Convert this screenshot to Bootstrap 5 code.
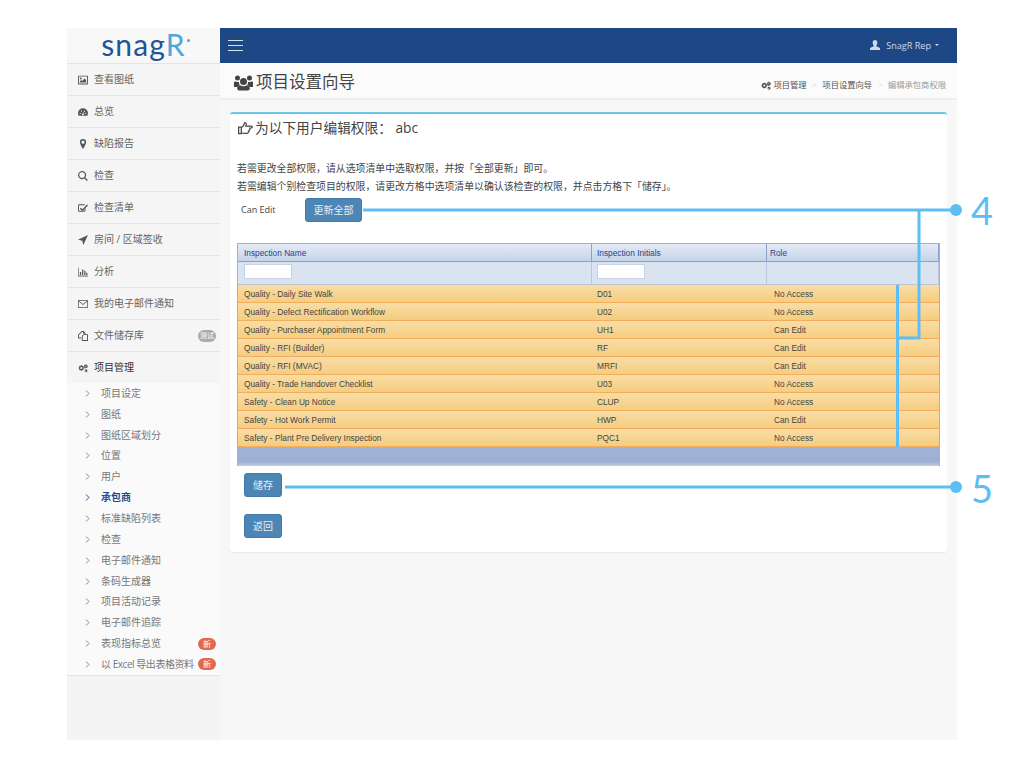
<!DOCTYPE html>
<html lang="zh">
<head>
  <meta charset="UTF-8">
  <meta name="viewport" content="width=device-width, initial-scale=1.0">
  <title>项目设置向导</title>
  <link href="https://cdn.jsdelivr.net/npm/bootstrap@5.3.2/dist/css/bootstrap.min.css" rel="stylesheet">
  <style>
    body {
      background: #fff;
      font-family: "Open Sans", "Noto Sans CJK SC", sans-serif;
      color: #333;
    }

    .app-frame {
      position: relative;
      width: 890px;
      height: 712px;
      margin: 28px 0 0 67px;
      background: #f7f7f7;
    }

    .app-side {
      width: 153px;
      background: #f4f4f4;
    }

    .side-logo {
      height: 35px;
      font-family: "Lato", sans-serif;
      font-size: 30px;
      line-height: 33px;
      letter-spacing: 1.2px;
      color: #1f5598;
      background: #f8f8f8;
    }

    .side-logo span { position: relative; color: #4fa6dc; }

    .side-logo span::after {
      content: "";
      position: absolute;
      right: -4px;
      top: 13px;
      width: 3px;
      height: 3px;
      border-radius: 50%;
      background: #4fa6dc;
    }

    .side-item {
      height: 32px;
      padding-left: 11px;
      gap: 6px;
      font-size: 10px;
      color: #666;
      border-top: 1px solid #e4e4e4;
      background: #f5f5f5;
      white-space: nowrap;
    }

    .side-item.is-open { color: #333; }

    .side-item svg { width: 10px; height: 10px; fill: #555; flex: none; }

    .side-subs {
      background: #fafafa;
      border-bottom: 1px solid #e4e4e4;
    }

    .side-sub {
      height: 20.85px;
      padding-left: 18px;
      gap: 11px;
      font-size: 10px;
      color: #777;
      white-space: nowrap;
    }

    .side-sub svg { width: 5px; height: 7px; stroke: #888; fill: none; flex: none; }
    .side-sub.is-active { color: #1f4d8c; font-weight: 700; }
    .side-sub.is-active svg { stroke: #1f4d8c; }
    .sub-tight { letter-spacing: -.45px; margin-right: -11px; }

    .tag-pill {
      width: 18px;
      height: 12px;
      border-radius: 6px;
      font-size: 8px;
      line-height: 12px;
      text-align: center;
      color: #fff;
      margin-left: auto;
      margin-right: 4px;
      flex: none;
    }

    .tag-test { background: #aaa; font-size: 7px; }
    .tag-new { background: #e2694f; }

    .top-bar {
      height: 35px;
      background: #1e4785;
      padding: 0 18px 0 8px;
      color: #cfd9e8;
      font-size: 9.1px;
    }

    .burger { width: 15px; }
    .burger i { display: block; height: 1px; background: #d5deeb; margin: 4px 0; }
    .user-name { margin-left: 2px; }

    .page-head {
      height: 37px;
      background: #fbfbfb;
      border-bottom: 2px solid #eee;
      padding: 4px 11px 0 14px;
    }

    .page-title { font-size: 16.5px; color: #444; gap: 3px; }
    .page-title svg { width: 19px; height: 17px; fill: #444; }

    .crumbs { font-size: 8.3px; color: #555; gap: 5.5px; margin-top: 5px; }
    .crumbs svg { width: 10px; height: 9px; fill: #444; }
    .crumb-first { gap: 2px; }
    .crumbs .crumb-sep { color: #ddd; }
    .crumbs .crumb-now { color: #999; }

    .main-card {
      height: 440px;
      margin: 12px 10px 0;
      background: #fff;
      border-top: 2px solid #6cc5ea;
      border-radius: 3px;
      box-shadow: 0 1px 1px rgba(0, 0, 0, .06);
      padding: 0 7px;
    }

    .card-heading {
      height: 28px;
      font-size: 13.7px;
      color: #444;
      gap: 2px;
      padding-left: 1px;
    }

    .card-heading svg { width: 15px; height: 14px; fill: none; stroke: #444; stroke-width: 1.3; }

    .help-text {
      margin: 17px 0 0;
      font-size: 9.9px;
      line-height: 18px;
      color: #444;
    }

    .bulk-row { height: 24px; margin-top: 3px; font-size: 9px; color: #444; }
    .bulk-label { width: 68px; padding-left: 4px; }

    .btn-steel {
      background: #4d85b5;
      border: 1px solid #4279a8;
      border-radius: 3px;
      color: #e6eef6;
      font-size: 10px;
      height: 24px;
      padding: 0;
      line-height: 22px;
    }

    .btn-wide { width: 57px; }
    .btn-small { width: 38px; display: block; margin-left: 7px; }
    .btn-save { margin-top: 7px; }
    .btn-back { margin-top: 17px; }

    .grid-wrap {
      margin-top: 21px;
      border: 1px solid #9fb2d3;
      border-bottom: 0;
      font-family: "Liberation Sans", Arial, sans-serif;
      font-size: 8.3px;
    }

    .grid-cols > :nth-child(1) { width: 354px; }
    .grid-cols > :nth-child(2) { width: 175px; }
    .grid-cols > :nth-child(3) { flex: 1; }

    .grid-head {
      height: 18px;
      background: linear-gradient(#e4eaf5, #c5d4ea);
      border-bottom: 1px solid #8ba3cc;
      color: #2b3f86;
    }

    .grid-head > div {
      height: 100%;
      line-height: 18px;
      padding-left: 6px;
      border-right: 1px solid #8ba3cc;
    }

    .grid-head > div:nth-child(2) { padding-left: 5px; }
    .grid-head > div:nth-child(3) { padding-left: 3px; }

    .grid-filter {
      height: 23px;
      background: #dae4f1;
      border-bottom: 1px solid #bcc4cf;
    }

    .grid-filter > div {
      height: 100%;
      padding: 2px 0 0 6px;
      border-right: 1px solid #b8c8de;
    }

    .grid-filter > div:nth-child(2) { padding-left: 5px; }

    .grid-filter i {
      display: block;
      width: 48px;
      height: 15px;
      background: #fff;
      border: 1px solid #c7d2e2;
    }

    .grid-row {
      height: 18px;
      line-height: 18px;
      background: linear-gradient(#f9dda6, #f5cd80);
      border-bottom: 1px solid #f2ae5b;
      color: #444;
    }

    .grid-row > div { padding-left: 6px; }
    .grid-row > div:nth-child(2) { padding-left: 5px; }
    .grid-row > div:nth-child(3) { padding-left: 7px; }

    .grid-foot {
      height: 19px;
      background: linear-gradient(#9fb3d6, #9db0d4 80%, #c6d0e4);
    }

    .call-lines {
      position: absolute;
      left: 0;
      top: 0;
      width: 100%;
      height: 100%;
      pointer-events: none;
      overflow: visible;
    }

    .call-num {
      position: absolute;
      left: 904px;
      font-family: "Lato", sans-serif;
      font-size: 38px;
      font-weight: 400;
      line-height: 1;
      color: #5cbef5;
    }

    .call-four { top: 163px; }
    .call-five { top: 441px; }
  </style>
</head>

<body>
  <svg width="0" height="0" class="d-block position-absolute">
    <symbol id="ic-image" viewBox="0 0 16 14"><path fill-rule="evenodd" d="M1 0h14a1 1 0 0 1 1 1v12a1 1 0 0 1-1 1H1a1 1 0 0 1-1-1V1a1 1 0 0 1 1-1zm.5 1.500v11h13v-11zM4.500 3a1.500 1.500 0 1 1 0 3 1.500 1.500 0 0 1 0-3zM3 11V9l2-2 1.500 1.500L10.500 4.500 13 7v4z"/></symbol>
    <symbol id="ic-gauge" viewBox="0 0 16 12"><path fill-rule="evenodd" d="M8 0a8 8 0 0 1 8 8c0 1.500-.4 2.900-1 4H1C.4 10.900 0 9.500 0 8a8 8 0 0 1 8-8zM3.500 7a1 1 0 1 0 0 2 1 1 0 0 0 0-2zm2-3.500a1 1 0 1 0 0 2 1 1 0 0 0 0-2zm5 0a1 1 0 1 0 0 2 1 1 0 0 0 0-2zm2 3.500a1 1 0 1 0 0 2 1 1 0 0 0 0-2zM9 4.500 7.300 8.300a1.500 1.500 0 1 0 1.400.2z"/></symbol>
    <symbol id="ic-pin" viewBox="0 0 10 16"><path fill-rule="evenodd" d="M5 0a5 5 0 0 1 5 5c0 2-3 8-5 11C3 13 0 7 0 5a5 5 0 0 1 5-5zm0 2.500a2.500 2.500 0 1 0 0 5 2.500 2.500 0 0 0 0-5z"/></symbol>
    <symbol id="ic-search" viewBox="0 0 16 16"><path fill-rule="evenodd" d="M6.500 0a6.500 6.500 0 0 1 5.200 10.400l4 4-1.400 1.400-4-4A6.500 6.500 0 1 1 6.500 0zm0 2a4.500 4.500 0 1 0 0 9 4.500 4.500 0 0 0 0-9z"/></symbol>
    <symbol id="ic-check" viewBox="0 0 16 14"><path fill-rule="evenodd" d="M2 1h9v1.500H2.500a1 1 0 0 0-1 1v7a1 1 0 0 0 1 1h7a1 1 0 0 0 1-1V8l1.500-1.500V11a2 2 0 0 1-2 2H2a2 2 0 0 1-2-2V3a2 2 0 0 1 2-2zM14.500 1.500 16 3 7 12 3 8l1.500-1.500L7 9z"/></symbol>
    <symbol id="ic-arrow" viewBox="0 0 14 14"><path d="M14 0 7.500 14 6 8 0 6.500z"/></symbol>
    <symbol id="ic-bars" viewBox="0 0 16 14"><path d="M0 0h1v13h15v1H0zM3 7h2v5H3zM6.500 3h2v9h-2zM10 5h2v7h-2zM13 8h2v4h-2z"/></symbol>
    <symbol id="ic-mail" viewBox="0 0 16 13"><path fill-rule="evenodd" d="M1.500 0h13A1.500 1.500 0 0 1 16 1.500v10a1.500 1.500 0 0 1-1.500 1.500h-13A1.500 1.500 0 0 1 0 11.500v-10A1.500 1.500 0 0 1 1.500 0zm0 1.200 6.500 5.300 6.500-5.300zM1.200 2.500v9.300h13.600V2.500L8 8z"/></symbol>
    <symbol id="ic-files" viewBox="0 0 16 16"><path fill-rule="evenodd" d="M6 0h3l3 3v2h-1.500V4H8V1.500H6.500L1.500 6.500v4H5V12H0V6zM9 5h3l4 0v11H6V8zm.5 1.500L7.500 8.500v6h7v-8z"/></symbol>
    <symbol id="ic-cogs" viewBox="0 0 18 14"><path fill-rule="evenodd" d="M5 2h2l.4 1.400 1.300-.6 1.400 1.400-.6 1.300L11 6v2l-1.500.5.600 1.300-1.400 1.400-1.300-.6L7 12H5l-.4-1.400-1.300.6-1.400-1.400.6-1.300L1 8V6l1.500-.5-.6-1.300 1.400-1.400 1.300.6zm1 3a2 2 0 1 0 0 4 2 2 0 0 0 0-4zM14 0l.8.2.2.9.8.4.8-.4.6.8-.5.7.2.9.9.3v1l-.9.2-.3.8.4.8-.8.600-.7-.5-.8.3-.3.9h-1l-.2-.9-.8-.3-.8.4-.6-.8.5-.7-.3-.8-.9-.3v-1l.9-.2.3-.9-.4-.7.8-.6.7.5.8-.4zm.200 3a1 1 0 1 0 0 2 1 1 0 0 0 0-2zM14 9l1 .2.100.7.7.2.600-.3.5.8-.5.5.1.7.7.3v1h-.9l-.4.600.2.500-.9.500-.4-.5h-1l-.4.5-.8-.5.200-.600-.4-.6-.8-.1v-1l.8-.2.100-.7-.5-.5.5-.8.700.3.600-.2zm0 2.300a.9.900 0 1 0 0 1.800.9.900 0 0 0 0-1.800z"/></symbol>
    <symbol id="ic-user" viewBox="0 0 14 14"><path d="M7 0c2 0 3.300 1.500 3.300 3.500S9.200 7.500 8.800 8c0 .8.500 1.200 1.500 1.600 1.500.6 3.200 1 3.700 2.400v2H0v-2c.5-1.400 2.200-1.800 3.700-2.400 1-.4 1.500-.8 1.500-1.600-.4-.5-1.500-2.500-1.500-4.500S5 0 7 0z"/></symbol>
    <symbol id="ic-users" viewBox="0 0 19 16"><path d="M9.500 3.500a3.500 3.500 0 1 1 0 7 3.500 3.500 0 0 1 0-7zM3.500 1a2.500 2.500 0 1 1 0 5 2.500 2.500 0 0 1 0-5zm12 0a2.500 2.500 0 1 1 0 5 2.500 2.500 0 0 1 0-5zM0 7.500C.3 7 1 6.800 1.800 7c1 .6 2 .7 3.200.4-.2 1.200.2 2.300 1 3.100-1.200.3-2 1-2.600 2H0zm19 0V12.500h-3.400c-.6-1-1.400-1.700-2.600-2 .8-.8 1.200-1.900 1-3.100 1.200.3 2.200.2 3.200-.4.800-.2 1.500 0 1.800.5zM6 10.800c1 .7 2.200 1 3.500 1s2.500-.3 3.500-1c1.700.3 2.800 1.500 2.800 3.200 0 1.300-.8 2-2 2H5.200c-1.200 0-2-.7-2-2 0-1.700 1.100-2.900 2.800-3.200z"/></symbol>
    <symbol id="ic-hand" viewBox="0 0 16 14"><path d="M.7 6h2.800v7H.7zM3.500 6.500C5 6 6 4.500 6.500 3L7 1.500c1.300-.5 2 .5 1.800 1.700L8.300 5h5.900c1.500 0 1.500 2 0 2h-1.700c.6 1.200 0 2-.7 2.200.3 1 0 1.600-.8 1.900.2 1-.3 1.700-1.300 1.700H6.500c-1.200 0-2-.6-3-.8"/></symbol>
    <symbol id="ic-angle" viewBox="0 0 5 7"><path d="M1 .5 4 3.500 1 6.500"/></symbol>
  </svg>

  <div class="app-frame d-flex">
    <aside class="app-side flex-shrink-0">
      <div class="side-logo text-center">snag<span>R</span></div>
      <div class="side-item d-flex align-items-center"><svg><use href="#ic-image"/></svg>查看图纸</div>
      <div class="side-item d-flex align-items-center"><svg><use href="#ic-gauge"/></svg>总览</div>
      <div class="side-item d-flex align-items-center"><svg><use href="#ic-pin"/></svg>缺陷报告</div>
      <div class="side-item d-flex align-items-center"><svg><use href="#ic-search"/></svg>检查</div>
      <div class="side-item d-flex align-items-center"><svg><use href="#ic-check"/></svg>检查清单</div>
      <div class="side-item d-flex align-items-center"><svg><use href="#ic-arrow"/></svg>房间 / 区域签收</div>
      <div class="side-item d-flex align-items-center"><svg><use href="#ic-bars"/></svg>分析</div>
      <div class="side-item d-flex align-items-center"><svg><use href="#ic-mail"/></svg>我的电子邮件通知</div>
      <div class="side-item d-flex align-items-center"><svg><use href="#ic-files"/></svg>文件储存库<span class="tag-pill tag-test">测试</span></div>
      <div class="side-item is-open d-flex align-items-center"><svg><use href="#ic-cogs"/></svg>项目管理</div>
      <div class="side-subs">
        <div class="side-sub d-flex align-items-center"><svg><use href="#ic-angle"/></svg>项目设定</div>
        <div class="side-sub d-flex align-items-center"><svg><use href="#ic-angle"/></svg>图纸</div>
        <div class="side-sub d-flex align-items-center"><svg><use href="#ic-angle"/></svg>图纸区域划分</div>
        <div class="side-sub d-flex align-items-center"><svg><use href="#ic-angle"/></svg>位置</div>
        <div class="side-sub d-flex align-items-center"><svg><use href="#ic-angle"/></svg>用户</div>
        <div class="side-sub is-active d-flex align-items-center"><svg><use href="#ic-angle"/></svg>承包商</div>
        <div class="side-sub d-flex align-items-center"><svg><use href="#ic-angle"/></svg>标准缺陷列表</div>
        <div class="side-sub d-flex align-items-center"><svg><use href="#ic-angle"/></svg>检查</div>
        <div class="side-sub d-flex align-items-center"><svg><use href="#ic-angle"/></svg>电子邮件通知</div>
        <div class="side-sub d-flex align-items-center"><svg><use href="#ic-angle"/></svg>条码生成器</div>
        <div class="side-sub d-flex align-items-center"><svg><use href="#ic-angle"/></svg>项目活动记录</div>
        <div class="side-sub d-flex align-items-center"><svg><use href="#ic-angle"/></svg>电子邮件追踪</div>
        <div class="side-sub d-flex align-items-center"><svg><use href="#ic-angle"/></svg>表现指标总览<span class="tag-pill tag-new">新</span></div>
        <div class="side-sub d-flex align-items-center"><svg><use href="#ic-angle"/></svg><span class="sub-tight">以 Excel 导出表格资料</span><span class="tag-pill tag-new">新</span></div>
      </div>
    </aside>

    <main class="flex-grow-1">
      <div class="top-bar d-flex align-items-center justify-content-between">
        <div class="burger"><i></i><i></i><i></i></div>
        <div class="d-flex align-items-center gap-1">
          <svg width="10" height="10" fill="#cfd9e8"><use href="#ic-user"/></svg>
          <span class="user-name">SnagR Rep</span>
          <span class="dropdown-toggle"></span>
        </div>
      </div>

      <div class="page-head d-flex align-items-center justify-content-between">
        <div class="page-title d-flex align-items-center"><svg><use href="#ic-users"/></svg>项目设置向导</div>
        <div class="crumbs d-flex align-items-center">
          <span class="crumb-first d-flex align-items-center"><svg><use href="#ic-cogs"/></svg>项目管理</span>
          <span class="crumb-sep">&gt;</span>
          <span>项目设置向导</span>
          <span class="crumb-sep">&gt;</span>
          <span class="crumb-now">编辑承包商权限</span>
        </div>
      </div>

      <section class="main-card">
        <div class="card-heading d-flex align-items-center"><svg><use href="#ic-hand"/></svg>为以下用户编辑权限： abc</div>
        <p class="help-text">若需更改全部权限，请从选项清单中选取权限，并按「全部更新」即可。<br>若需编辑个别检查项目的权限，请更改方格中选项清单以确认该检查的权限，并点击方格下「储存」。</p>
        <div class="bulk-row d-flex align-items-center">
          <span class="bulk-label">Can Edit</span>
          <button type="button" class="btn btn-steel btn-wide">更新全部</button>
        </div>

        <div class="grid-wrap">
          <div class="grid-head grid-cols d-flex"><div>Inspection Name</div><div>Inspection Initials</div><div>Role</div></div>
          <div class="grid-filter grid-cols d-flex"><div><i></i></div><div><i></i></div><div></div></div>
          <div class="grid-row grid-cols d-flex"><div>Quality - Daily Site Walk</div><div>D01</div><div>No Access</div></div>
          <div class="grid-row grid-cols d-flex"><div>Quality - Defect Rectification Workflow</div><div>U02</div><div>No Access</div></div>
          <div class="grid-row grid-cols d-flex"><div>Quality - Purchaser Appointment Form</div><div>UH1</div><div>Can Edit</div></div>
          <div class="grid-row grid-cols d-flex"><div>Quality - RFI (Builder)</div><div>RF</div><div>Can Edit</div></div>
          <div class="grid-row grid-cols d-flex"><div>Quality - RFI (MVAC)</div><div>MRFI</div><div>Can Edit</div></div>
          <div class="grid-row grid-cols d-flex"><div>Quality - Trade Handover Checklist</div><div>U03</div><div>No Access</div></div>
          <div class="grid-row grid-cols d-flex"><div>Safety - Clean Up Notice</div><div>CLUP</div><div>No Access</div></div>
          <div class="grid-row grid-cols d-flex"><div>Safety - Hot Work Permit</div><div>HWP</div><div>Can Edit</div></div>
          <div class="grid-row grid-cols d-flex"><div>Safety - Plant Pre Delivery Inspection</div><div>PQC1</div><div>No Access</div></div>
          <div class="grid-foot"></div>
        </div>

        <button type="button" class="btn btn-steel btn-small btn-save">储存</button>
        <button type="button" class="btn btn-steel btn-small btn-back">返回</button>
      </section>
    </main>

    <!-- callouts sit on top of the page, coords relative to the frame -->
    <svg class="call-lines" viewBox="0 0 890 712">
      <g stroke="#5cbef5" stroke-width="3" fill="none">
        <path d="M296 182H889"/>
        <path d="M852 182V310H829"/>
        <path d="M830.500 257V419"/>
        <path d="M218 459H889"/>
      </g>
      <circle cx="889" cy="182" r="6" fill="#5cbef5"/>
      <circle cx="889" cy="459" r="6" fill="#5cbef5"/>
    </svg>
    <span class="call-num call-four">4</span>
    <span class="call-num call-five">5</span>
  </div>

  <script src="https://cdn.jsdelivr.net/npm/bootstrap@5.3.2/dist/js/bootstrap.bundle.min.js"></script>
</body>

</html>
